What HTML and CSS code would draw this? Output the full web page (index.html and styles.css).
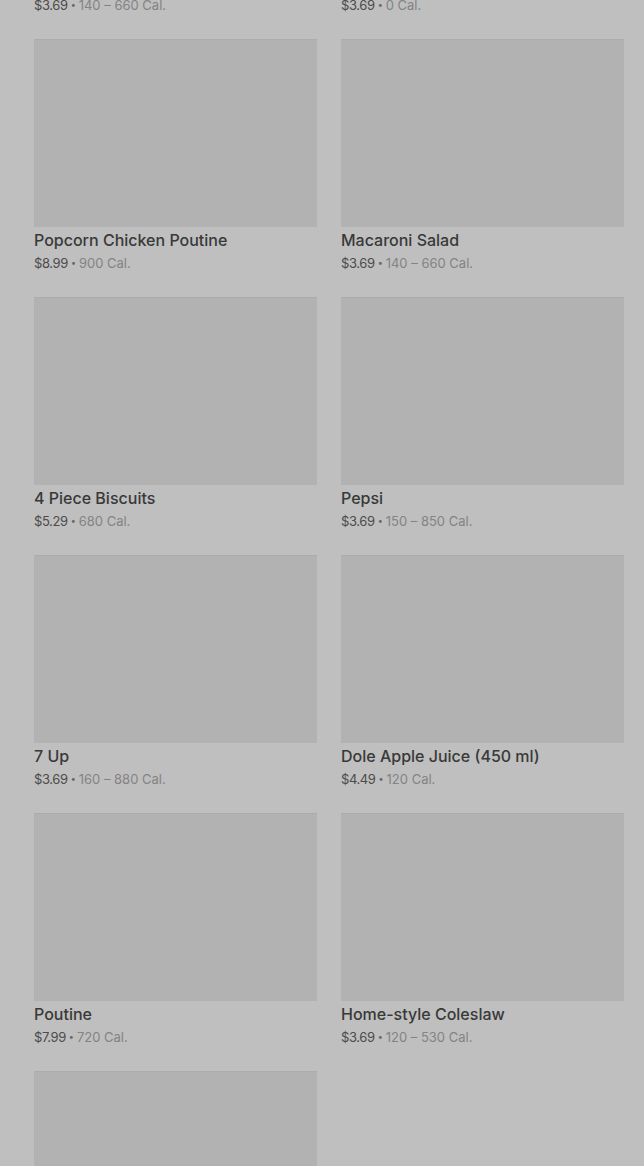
FILE: index.html
```html
<!DOCTYPE html>
<html lang="en">
<head>
  <meta charset="UTF-8">
  <meta name="viewport" content="width=device-width, initial-scale=1.0">
  <title>Menu</title>
  <link rel="stylesheet" href="styles.css">
</head>
<body>

  <div class="menu-grid" id="menu-list"></div>
  <div class="backdrop"></div>

  <script>
    const items = [
      { name: "Large Fries", price: "$3.69", cal: "140 – 660 Cal." },
      { name: "Bottled Water", price: "$3.69", cal: "0 Cal." },
      { name: "Popcorn Chicken Poutine", price: "$8.99", cal: "900 Cal." },
      { name: "Macaroni Salad", price: "$3.69", cal: "140 – 660 Cal." },
      { name: "4 Piece Biscuits", price: "$5.29", cal: "680 Cal." },
      { name: "Pepsi", price: "$3.69", cal: "150 – 850 Cal." },
      { name: "7 Up", price: "$3.69", cal: "160 – 880 Cal." },
      { name: "Dole Apple Juice (450 ml)", price: "$4.49", cal: "120 Cal." },
      { name: "Poutine", price: "$7.99", cal: "720 Cal." },
      { name: "Home-style Coleslaw", price: "$3.69", cal: "120 – 530 Cal." },
      { name: "Mashed Potatoes", price: "$3.69", cal: "200 Cal." }
    ];

    const listEl = document.getElementById("menu-list");

    items.forEach(item => {
      const div = document.createElement("div");
      div.className = "menu-card";
      div.innerHTML = `
        <div class="menu-img"></div>
        <h3>${item.name}</h3>
        <p class="meta"><span class="price">${item.price}</span><span class="dot">•</span><span class="cal">${item.cal}</span></p>
      `;
      listEl.appendChild(div);
    });
  </script>
</body>
</html>
```

FILE: styles.css
```css
html, body {
  margin: 0;
  background: #fff;
  font-family: Inter, "Noto Sans", sans-serif;
  overflow: hidden;
}
.menu-grid {
  display: grid;
  grid-template-columns: 283px 283px;
  column-gap: 24px;
  row-gap: 25px;
  padding-left: 34px;
  margin-top: -219px;
}
.menu-img {
  height: 188px;
  background: #eeeeee;
  box-shadow: inset 0 1px 0 #e6e6e6;
}
.menu-card h3 {
  margin: 3px 0 0;
  font-size: 16px;
  line-height: 20px;
  font-weight: 500;
  color: #4d4d4d;
}
.meta {
  display: flex;
  align-items: center;
  height: 18px;
  margin: 4px 0 0;
  font-size: 13px;
  line-height: 18px;
  color: #b0b0b0;
}
.price {
  color: #666;
  letter-spacing: -0.4px;
}
.dot {
  margin: 0 3px;
  font-size: 9px;
  line-height: 18px;
  color: #888;
}
.backdrop {
  position: fixed;
  inset: 0;
  background: rgba(0, 0, 0, 0.25);
}
```
